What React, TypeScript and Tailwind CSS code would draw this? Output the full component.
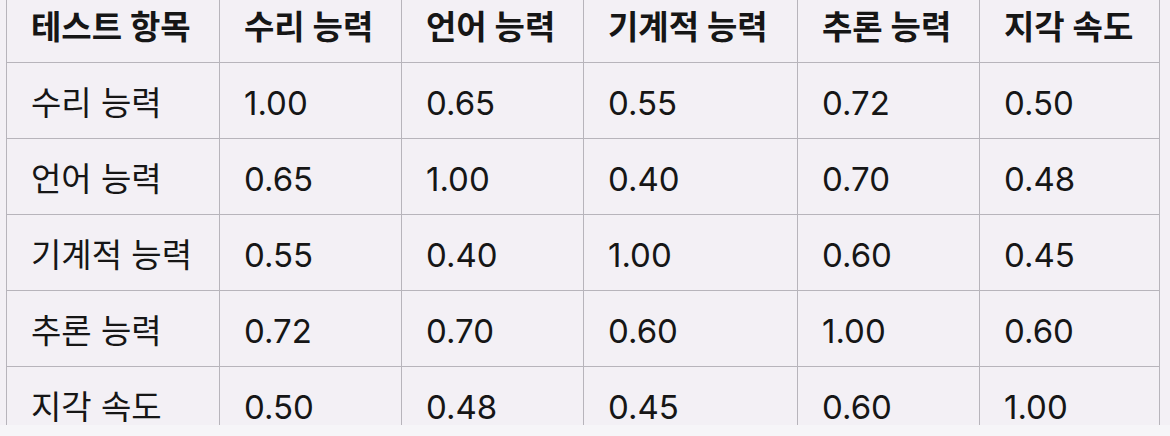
import React from 'react';

const headers = ['테스트 항목', '수리 능력', '언어 능력', '기계적 능력', '추론 능력', '지각 속도'];

const rows: [string, string[]][] = [
  ['수리 능력', ['1.00', '0.65', '0.55', '0.72', '0.50']],
  ['언어 능력', ['0.65', '1.00', '0.40', '0.70', '0.48']],
  ['기계적 능력', ['0.55', '0.40', '1.00', '0.60', '0.45']],
  ['추론 능력', ['0.72', '0.70', '0.60', '1.00', '0.60']],
  ['지각 속도', ['0.50', '0.48', '0.45', '0.60', '1.00']],
];

const widths = ['w-[213px]', 'w-[182px]', 'w-[182px]', 'w-[214px]', 'w-[182px]', 'w-[180px]'];

const App: React.FC = () => {
  return (
    <div
      className="w-[1170px] h-[436px] bg-[#f6f5f8] text-[#161616]"
      style={{ fontFamily: 'Inter, "Noto Sans CJK KR", sans-serif' }}
    >
      <div className="h-[425px] overflow-hidden bg-[#f3f0f5] pl-[6px]">
        <table className="table-fixed border-collapse -mt-[14px] text-[33px] leading-none">
          <colgroup>
            {widths.map((w, i) => (
              <col key={i} className={w} />
            ))}
          </colgroup>
          <thead>
            <tr className="h-[76px]">
              {headers.map((h) => (
                <th
                  key={h}
                  className="border border-[#b7b4bb] border-t-0 px-6 pt-[8px] text-left font-bold"
                >
                  {h}
                </th>
              ))}
            </tr>
          </thead>
          <tbody>
            {rows.map(([label, vals]) => (
              <tr key={label} className="h-[76px]">
                <td className="border border-[#b7b4bb] px-6 pt-[7px]">{label}</td>
                {vals.map((v, i) => (
                  <td key={i} className="border border-[#b7b4bb] px-6 pt-[7px]">
                    {v}
                  </td>
                ))}
              </tr>
            ))}
          </tbody>
        </table>
      </div>
    </div>
  );
};

export default App;
